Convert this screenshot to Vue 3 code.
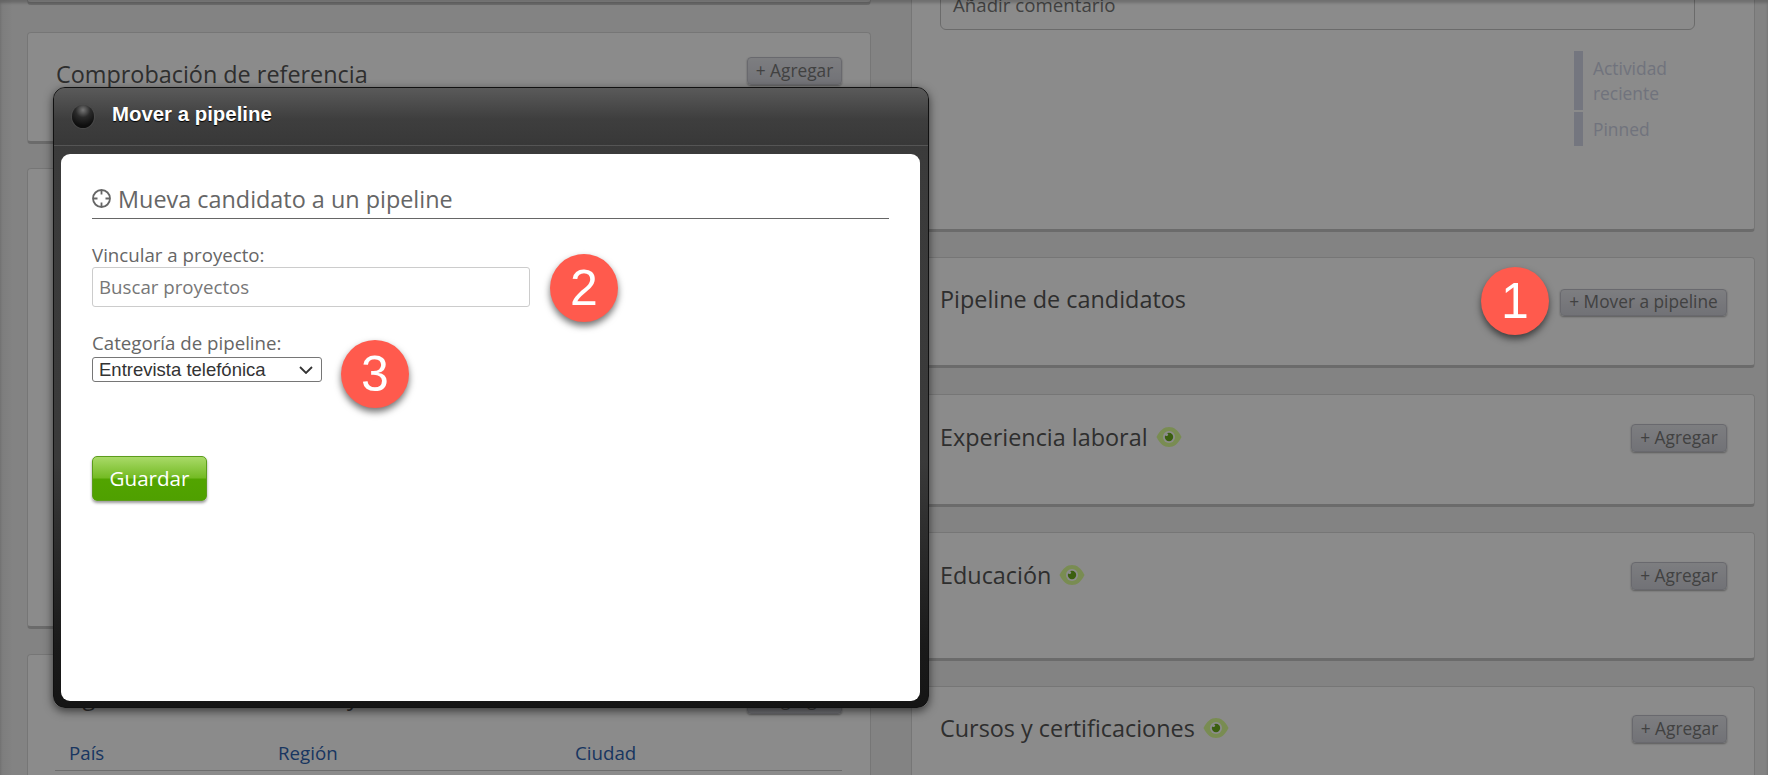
<template>
  <div class="page">
    <div class="columns">
      <!-- left column -->
      <div class="col">
        <section class="card left-top"></section>
        <section class="card left-ref">
          <div class="card-head">
            <h3 class="card-title">Comprobación de referencia</h3>
            <button class="soft-btn narrow">+ Agregar</button>
          </div>
        </section>
        <section class="card left-mid"></section>
        <section class="card left-loc">
          <div class="card-head">
            <h3 class="card-title">Lugar de residencia actual y ciudad</h3>
            <button class="soft-btn narrow">+ Agregar</button>
          </div>
          <div class="loc-table">
            <span v-for="col in locationCols" :key="col">{{ col }}</span>
          </div>
        </section>
      </div>

      <!-- right column -->
      <div class="col">
        <section class="card right-top">
          <div class="comment-box">Añadir comentario</div>
          <ul class="activity-tabs">
            <li v-for="tab in activityTabs" :key="tab">{{ tab }}</li>
          </ul>
        </section>
        <section v-for="item in rightCards" :key="item.title" class="card" :class="item.cls">
          <div class="card-head">
            <h3 class="card-title">
              {{ item.title }}
              <svg v-if="item.eye" class="eye" viewBox="0 0 26 20" width="26" height="20">
                <path d="M.5 10C4 3 8 0 13 0s9 3 12.500 10c-3.500 7-7.500 10-12.500 10S4 17 .5 10z" fill="#dcff96" />
                <circle cx="13" cy="10" r="6" fill="#fff" />
                <circle cx="13" cy="10" r="4.200" fill="#6cae1c" />
                <circle cx="10.500" cy="7.500" r="1.600" fill="#fff" />
              </svg>
            </h3>
            <button class="soft-btn" :class="item.btnCls">{{ item.btn }}</button>
          </div>
        </section>
      </div>
    </div>

    <div class="overlay"></div>

    <span class="badge badge-one">1</span>

    <div class="modal">
      <div class="modal-head">
        <span class="modal-dot"></span>
        <span class="modal-title">Mover a pipeline</span>
      </div>
      <div class="modal-panel">
        <h2 class="panel-heading">
          <svg class="target" viewBox="0 0 19 19" width="19" height="19" fill="none" stroke="#666" stroke-width="1.800">
            <circle cx="9.500" cy="9.500" r="8.500" />
            <path d="M9.500 1v4.500M9.500 13.500V18M1 9.500h4.500M13.500 9.500H18" />
          </svg>
          Mueva candidato a un pipeline
        </h2>
        <label class="field-label">Vincular a proyecto:</label>
        <input class="project-input" type="text" placeholder="Buscar proyectos" />
        <label class="field-label second">Categoría de pipeline:</label>
        <select class="category-select">
          <option>Entrevista telefónica</option>
          <option>Entrevista presencial</option>
          <option>Oferta</option>
        </select>
        <button class="save-btn">Guardar</button>
      </div>
      <span class="badge badge-two">2</span>
      <span class="badge badge-three">3</span>
    </div>
  </div>
</template>

<script setup>
const locationCols = ['País', 'Región', 'Ciudad'];
const activityTabs = ['Actividad reciente', 'Pinned'];

const rightCards = [
  { title: 'Pipeline de candidatos', btn: '+ Mover a pipeline', cls: 'right-pipeline', btnCls: 'wide' },
  { title: 'Experiencia laboral', btn: '+ Agregar', eye: true, cls: 'right-exp' },
  { title: 'Educación', btn: '+ Agregar', eye: true, cls: 'right-edu' },
  { title: 'Cursos y certificaciones', btn: '+ Agregar', btnCls: 'narrow', eye: true, cls: 'right-courses' },
];
</script>

<style>
html,
body {
  margin: 0;
  overflow: hidden;
}
</style>

<style scoped>
.page {
  position: relative;
  width: 1768px;
  height: 775px;
  overflow: hidden;
  background: linear-gradient(90deg, #e2e2e2, #eeeeee 12px);
  font-family: "Open Sans", "Noto Sans", sans-serif;
}

.columns {
  display: grid;
  grid-template-columns: 844px 844px;
  column-gap: 40px;
  padding: 0 13px 0 27px;
}

.col {
  display: flex;
  flex-direction: column;
  min-width: 0;
}

.card {
  box-sizing: border-box;
  flex: none;
  background: #fdfdfd;
  border: 1px solid #d8d8d8;
  border-bottom: 3px solid #c4c4c4;
  border-radius: 4px;
}

.left-top {
  height: 105px;
  margin-top: -100px;
}

.left-ref {
  height: 112px;
  margin-top: 27px;
  padding-top: 24px;
}

.left-ref .card-title {
  margin-top: 6px;
}

.left-mid {
  height: 461px;
  margin-top: 24px;
}

.left-loc {
  height: 200px;
  margin-top: 25px;
  padding-top: 31px;
}

.left-loc .card-title {
  margin-bottom: 8px;
}

.left-ref .card-head,
.left-loc .card-head {
  padding-right: 28px;
}

.right-top {
  height: 282px;
  margin-top: -50px;
  padding: 9px 59px 0 28px;
}

.right-pipeline {
  height: 111px;
  margin-top: 25px;
  padding-top: 30px;
}

.right-exp {
  height: 113px;
  margin-top: 26px;
  padding-top: 29px;
}

.right-edu {
  height: 129px;
  margin-top: 25px;
  padding-top: 29px;
}

.right-courses {
  height: 150px;
  margin-top: 25px;
  padding-top: 28px;
}

.card-head {
  display: flex;
  align-items: center;
  justify-content: space-between;
  height: 28px;
  padding: 0 27px 0 28px;
}

.card-title {
  display: flex;
  align-items: center;
  gap: 8px;
  margin: 0;
  font-size: 23.400px;
  font-weight: 400;
  color: #555;
  white-space: nowrap;
}

.col:last-child .card-title {
  margin-bottom: 2px;
}

.col:last-child .right-pipeline .card-title {
  margin-bottom: 6px;
}

.eye {
  flex: none;
}

.soft-btn {
  box-sizing: border-box;
  flex: none;
  width: 96px;
  height: 28px;
  padding: 0 0 2px;
  border: 1px solid #bfc0c8;
  border-radius: 4px;
  background: linear-gradient(#e4e5ea, #cfd0d8);
  box-shadow: 0 1px 2px rgba(0, 0, 0, 0.35);
  font-family: inherit;
  font-size: 17.300px;
  color: #777;
}

.soft-btn.narrow {
  width: 95px;
}

.soft-btn.wide {
  width: 167px;
  height: 27px;
}

.comment-box {
  box-sizing: border-box;
  height: 70px;
  padding: 33px 12px 0;
  border: 1px solid #c4c4c4;
  border-radius: 6px;
  font-size: 18.700px;
  line-height: 22px;
  color: #777;
}

.activity-tabs {
  display: flex;
  flex-direction: column;
  gap: 2px;
  width: 121px;
  margin: 21px 0 0 auto;
  padding: 0;
  list-style: none;
}

.activity-tabs li {
  padding: 4.500px 10px 4.500px 10px;
  border-left: 9px solid #d4d8e8;
  font-size: 17.400px;
  line-height: 25px;
  color: #cdd2e4;
}

.loc-table {
  display: grid;
  grid-template-columns: 209px 297px 1fr;
  margin: 29px 28px 0 27px;
  padding: 0 14px 7px;
  border-bottom: 1px solid #c8c8c8;
  font-size: 18.700px;
  line-height: 20px;
  color: #2f63b0;
}

.overlay {
  position: absolute;
  inset: 0;
  background: rgba(0, 0, 0, 0.45);
  box-shadow: inset 0 3px 3px rgba(0, 0, 0, 0.2);
}

.badge {
  position: absolute;
  display: flex;
  align-items: center;
  justify-content: center;
  width: 68px;
  height: 68px;
  border-radius: 50%;
  background: #ff5a4d;
  box-shadow: 0 4px 7px rgba(0, 0, 0, 0.55);
  font-family: "Liberation Sans", Arial, sans-serif;
  font-size: 50px;
  color: #fff;
}

.badge-one {
  left: 1481px;
  top: 267px;
}

.badge-two {
  left: 496px;
  top: 166px;
}

.badge-three {
  left: 287px;
  top: 252px;
}

.modal {
  position: absolute;
  left: 53px;
  top: 87px;
  box-sizing: border-box;
  display: flex;
  flex-direction: column;
  width: 876px;
  height: 621px;
  border: 1px solid #111;
  border-radius: 12px;
  background: linear-gradient(#3b3b3b, #3a3a3a 60%, #1a1a1a 90%, #151515);
  box-shadow: 0 3px 10px rgba(0, 0, 0, 0.6);
}

.modal-head {
  box-sizing: border-box;
  display: flex;
  flex: none;
  align-items: center;
  gap: 18px;
  height: 58px;
  padding-left: 18px;
  border-bottom: 1px solid #555;
  border-radius: 11px 11px 0 0;
  background: linear-gradient(#5a5a5a, #3e3e3e 55%, #383838);
}

.modal-dot {
  flex: none;
  width: 22px;
  height: 23px;
  border-radius: 50%;
  background: radial-gradient(circle at 50% 22%, #777, #2a2a2a 35%, #0e0e0e 75%);
  box-shadow: 0 0 1px 1px #4b4b4b;
}

.modal-title {
  margin-bottom: 4px;
  font-family: "Liberation Sans", Arial, sans-serif;
  font-size: 20.400px;
  font-weight: 700;
  color: #fff;
  text-shadow: 0 1px 1px #000;
}

.modal-panel {
  box-sizing: border-box;
  display: flex;
  flex: 1;
  flex-direction: column;
  align-items: flex-start;
  margin: 8px 8px 6px 7px;
  padding: 30px 31px;
  border-radius: 9px;
  background: #fff;
}

.panel-heading {
  box-sizing: border-box;
  display: flex;
  align-items: center;
  gap: 7px;
  width: 100%;
  height: 35px;
  margin: 0 0 26px;
  padding-bottom: 5px;
  border-bottom: 1px solid #666;
  font-size: 23.400px;
  font-weight: 400;
  color: #666;
}

.target {
  flex: none;
}

.field-label {
  font-size: 18.700px;
  line-height: 20px;
  color: #666;
}

.field-label.second {
  margin-top: 26px;
}

.project-input {
  box-sizing: border-box;
  width: 438px;
  height: 40px;
  margin-top: 2px;
  padding: 0 6px 2px;
  border: 1px solid #ccc;
  border-radius: 3px;
  outline: none;
  font-family: inherit;
  font-size: 18.700px;
  color: #555;
}

.project-input::placeholder {
  color: #777;
}

.category-select {
  box-sizing: border-box;
  width: 230px;
  height: 25px;
  margin-top: 4px;
  padding: 0 24px 0 6px;
  border: 1px solid #767676;
  border-radius: 3px;
  appearance: none;
  background: #fff url("data:image/svg+xml,%3Csvg xmlns='http://www.w3.org/2000/svg' width='14' height='8' fill='none' stroke='%23333' stroke-width='1.800'%3E%3Cpath d='M1 1l6 6 6-6'/%3E%3C/svg%3E") no-repeat right 8px center;
  font-family: "Liberation Sans", Arial, sans-serif;
  font-size: 18.500px;
  color: #333;
}

.save-btn {
  box-sizing: border-box;
  width: 115px;
  height: 45px;
  margin-top: 74px;
  padding: 0 0 2px;
  border: 1px solid #5c9c1c;
  border-radius: 5px;
  background: linear-gradient(#a9da68, #74bb24 48%, #52a400 52%, #4fa000);
  box-shadow: 0 2px 3px rgba(0, 0, 0, 0.4);
  font-family: inherit;
  font-size: 20.600px;
  color: #fff;
}
</style>
